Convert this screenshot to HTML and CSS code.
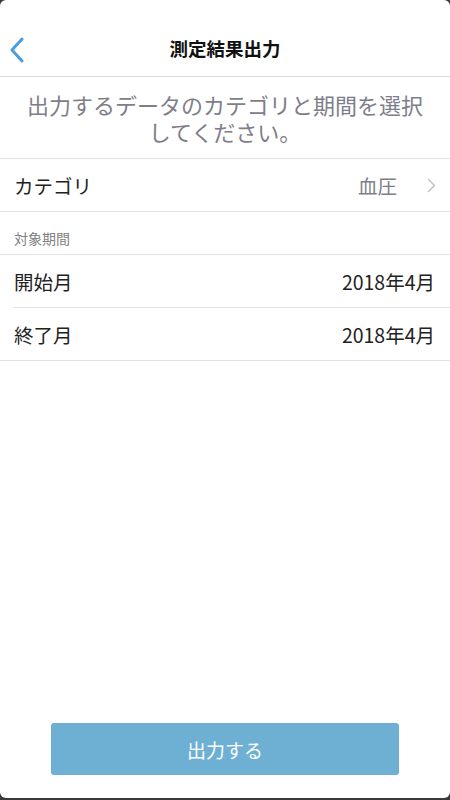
FILE: index.html
```html
<!DOCTYPE html>
<html lang="ja">
<head>
    <meta charset="UTF-8">
    <meta name="viewport" content="width=device-width, initial-scale=1.0">
    <title>測定結果出力</title>
    <link rel="stylesheet" href="styles.css">
</head>
<body>
    <div class="pantalla">
        <!-- Barra de navegación -->
        <header class="nav">
            <a class="nav-atras" href="#">
                <svg width="16" height="26" viewBox="0 0 16 26">
                    <path d="M13 2 L3 13 L13 24" fill="none" stroke="#4a9ede" stroke-width="3" stroke-linecap="round" stroke-linejoin="round"/>
                </svg>
            </a>
            <h1 class="nav-titulo">測定結果出力</h1>
        </header>

        <p class="descripcion">出力するデータのカテゴリと期間を選択<br>してください。</p>

        <div class="fila fila-categoria">
            <span class="fila-label">カテゴリ</span>
            <span class="fila-valor gris">血圧</span>
            <svg class="chevron" width="9" height="15" viewBox="0 0 9 15">
                <path d="M1.5 1.5 L7.5 7.5 L1.5 13.5" fill="none" stroke="#c4c4c9" stroke-width="1.6" stroke-linecap="round" stroke-linejoin="round"/>
            </svg>
        </div>

        <div class="seccion">対象期間</div>

        <div class="grupo">
            <div class="fila">
                <span class="fila-label">開始月</span>
                <span class="fila-valor">2018年4月</span>
            </div>
            <div class="fila">
                <span class="fila-label">終了月</span>
                <span class="fila-valor">2018年4月</span>
            </div>
        </div>

        <div class="pie">
            <button class="boton" type="button">出力する</button>
        </div>
    </div>
</body>
</html>
```

FILE: styles.css
```css
html {
    background: #3a3a3a;
}

body {
    margin: 0;
    padding: 0;
    font-family: "Noto Sans CJK JP", "Noto Sans", sans-serif;
    color: #222;
}

.pantalla {
    background: #fff;
    height: 798px;
    border-radius: 6px;
    display: flex;
    flex-direction: column;
    overflow: hidden;
}

/* Barra superior */
.nav {
    height: 77px;
    flex-shrink: 0;
    display: flex;
    align-items: center;
    justify-content: center;
    border-bottom: 1px solid #dcdcdc;
    box-sizing: border-box;
    position: relative;
    padding-top: 20px;
}

.nav-atras {
    position: absolute;
    left: 9px;
    top: 37px;
    display: block;
}

.nav-titulo {
    margin: 0;
    font-size: 18.5px;
    font-weight: bold;
    color: #111;
}

.descripcion {
    margin: 0;
    padding: 14px 8px 13px;
    font-size: 22px;
    line-height: 27px;
    text-align: center;
    color: #7e7e8a;
    border-bottom: 1px solid #e2e2e2;
}

.fila {
    height: 52px;
    display: flex;
    align-items: center;
    padding: 0 15px 0 14px;
    font-size: 19.5px;
}

.fila-label {
    flex: 1;
}

.fila-valor {
    color: #222;
}

.gris {
    color: #7e7e8a;
}

.fila-categoria {
    border-bottom: 1px solid #e2e2e2;
}

.chevron {
    margin-left: 30px;
    margin-right: -1px;
}

.seccion {
    height: 43px;
    box-sizing: border-box;
    padding: 16px 14px 0;
    font-size: 14px;
    color: #808080;
    border-bottom: 1px solid #e2e2e2;
}

.grupo {
    border-bottom: 1px solid #e2e2e2;
}

.grupo .fila + .fila {
    border-top: 1px solid #e2e2e2;
    margin-left: 13px;
    padding-left: 1px;
}

/* Botón inferior */
.pie {
    margin-top: auto;
    padding: 0 51px 23px;
}

.boton {
    width: 100%;
    height: 52px;
    border: none;
    border-radius: 3px;
    background-color: #6eb0d4;
    color: #fff;
    font-family: "Noto Sans CJK JP", "Noto Sans", sans-serif;
    font-size: 19px;
    cursor: pointer;
}
```
